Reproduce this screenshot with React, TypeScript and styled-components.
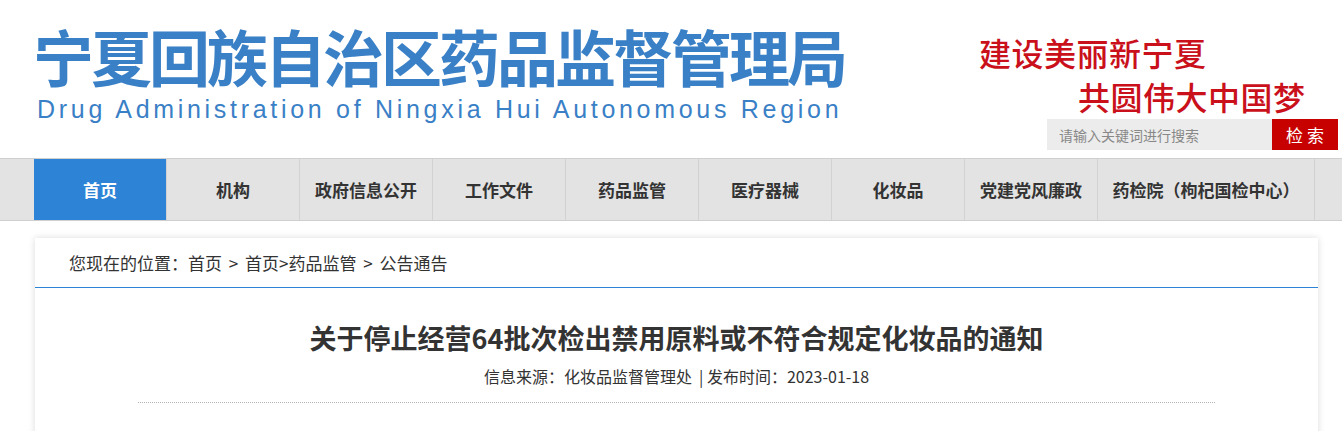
import * as React from 'react';
import styled, { createGlobalStyle } from 'styled-components';

const GlobalStyle = createGlobalStyle`
  html, body {
    margin: 0;
    padding: 0;
    background: #fff;
    font-family: "Noto Sans CJK SC", "Noto Sans", sans-serif;
    color: #333;
  }
`;

const StyledHeader = styled.div`
  height: 158px;
  display: flex;
  justify-content: space-between;
`;

const StyledLogo = styled.div`
  padding-left: 33px;
  padding-top: 21px;
  display: flex;
  flex-direction: column;
`;

const StyledLogoCn = styled.div`
  font-size: 61px;
  line-height: 70px;
  font-weight: 700;
  letter-spacing: -3px;
  color: #3a80c6;
  white-space: nowrap;
`;

const StyledLogoEn = styled.div`
  font-family: "Liberation Sans", Arial, sans-serif;
  font-size: 25px;
  line-height: 30px;
  letter-spacing: 3.7px;
  color: #3a80c6;
  padding-left: 4px;
  margin-top: 3px;
  white-space: nowrap;
`;

const StyledAside = styled.div`
  display: flex;
  flex-direction: column;
  align-items: flex-end;
  padding-top: 30px;
  padding-right: 4px;
`;

const StyledSlogan = styled.div<{ indent: number }>`
  font-size: 32px;
  line-height: 44px;
  font-weight: 500;
  color: #c9101b;
  letter-spacing: 0.5px;
  align-self: flex-start;
  margin-left: ${({ indent }) => indent}px;
  white-space: nowrap;
`;

const StyledSearch = styled.div`
  display: flex;
  margin-top: 1px;
  height: 31px;
`;

const StyledSearchInput = styled.input`
  width: 213px;
  border: none;
  outline: none;
  background: #ececec;
  padding: 0 0 0 12px;
  font-family: "Noto Sans CJK SC", sans-serif;
  font-size: 14px;
  color: #555;

  &::placeholder {
    color: #888;
  }
`;

const StyledSearchButton = styled.button`
  width: 66px;
  border: none;
  background: #c70000;
  color: #fff;
  font-family: "Noto Sans CJK SC", sans-serif;
  font-size: 17px;
  letter-spacing: 4px;
  padding: 0 0 0 4px;
  cursor: pointer;
`;

const StyledNav = styled.div`
  background: #e3e3e3;
  border-top: 1px solid #cfcfcf;
  border-bottom: 1px solid #cfcfcf;
`;

const StyledNavList = styled.div`
  display: flex;
  margin-left: 34px;
  width: 1283px;
  height: 61px;
`;

const StyledNavItem = styled.a<{ active?: boolean; wide?: boolean }>`
  display: flex;
  align-items: center;
  justify-content: center;
  width: ${({ wide }) => (wide ? '216px' : '132px')};
  border-right: 1px solid #d2d2d2;
  background: ${({ active }) => (active ? '#2d84d6' : 'transparent')};
  color: ${({ active }) => (active ? '#fff' : '#333')};
  font-size: 17px;
  font-weight: 700;
  white-space: nowrap;
  cursor: pointer;
`;

const StyledCard = styled.div`
  margin: 17px 0 0 35px;
  width: 1283px;
  height: 260px;
  background: #fff;
  box-shadow: 0 0 7px rgba(0, 0, 0, 0.14);
`;

const StyledCrumbs = styled.div`
  height: 49px;
  border-bottom: 1px solid #2d84d6;
  display: flex;
  align-items: center;
  padding-left: 34px;
  font-size: 17px;
  word-spacing: 3px;
  color: #333;
  white-space: pre;
`;

const StyledTitle = styled.h1`
  margin: 32px 0 0;
  text-align: center;
  font-size: 27px;
  line-height: 36px;
  font-weight: 700;
  color: #333;
`;

const StyledMeta = styled.div`
  margin-top: 10px;
  text-align: center;
  font-size: 16px;
  line-height: 20px;
  color: #333;
  white-space: pre;
`;

const StyledDivider = styled.div`
  margin: 16px 103px 0;
  border-top: 1px dotted #b5b5b5;
`;

const navItems = ['首页', '机构', '政府信息公开', '工作文件', '药品监管', '医疗器械', '化妆品', '党建党风廉政', '药检院（枸杞国检中心）'];

export default function App() {
  return (
    <>
      <GlobalStyle />
      <StyledHeader>
        <StyledLogo>
          <StyledLogoCn>宁夏回族自治区药品监督管理局</StyledLogoCn>
          <StyledLogoEn>Drug Administration of Ningxia Hui Autonomous Region</StyledLogoEn>
        </StyledLogo>
        <StyledAside>
          <StyledSlogan indent={-68}>建设美丽新宁夏</StyledSlogan>
          <StyledSlogan indent={31}>共圆伟大中国梦</StyledSlogan>
          <StyledSearch>
            <StyledSearchInput placeholder="请输入关键词进行搜索" />
            <StyledSearchButton>检索</StyledSearchButton>
          </StyledSearch>
        </StyledAside>
      </StyledHeader>
      <StyledNav>
        <StyledNavList>
          {navItems.map((item, i) => (
            <StyledNavItem key={item} active={i === 0} wide={i === navItems.length - 1}>
              {item}
            </StyledNavItem>
          ))}
        </StyledNavList>
      </StyledNav>
      <StyledCard>
        <StyledCrumbs>您现在的位置：首页 &gt; 首页&gt;药品监管 &gt; 公告通告</StyledCrumbs>
        <StyledTitle>关于停止经营64批次检出禁用原料或不符合规定化妆品的通知</StyledTitle>
        <StyledMeta>信息来源：化妆品监督管理处  | 发布时间：2023-01-18</StyledMeta>
        <StyledDivider />
      </StyledCard>
    </>
  );
}
